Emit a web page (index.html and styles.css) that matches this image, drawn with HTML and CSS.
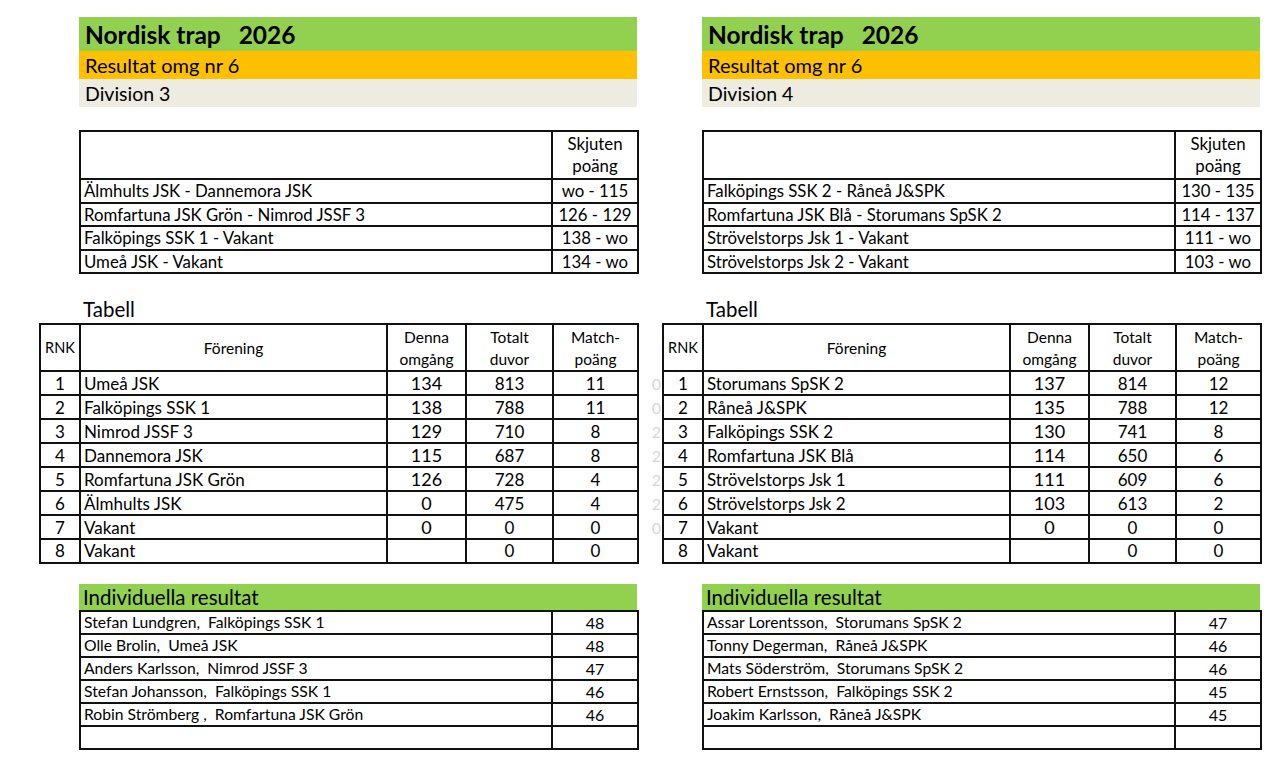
FILE: index.html
```html
<!DOCTYPE html>
<html lang="sv">
<head>
<meta charset="utf-8">
<title>Nordisk trap 2026</title>
<link rel="stylesheet" href="styles.css">
</head>
<body>
<div class="page">
  <section class="col col-left">
    <div class="head">
      <div class="title">Nordisk trap&nbsp;&nbsp; 2026</div>
      <div class="sub">Resultat omg nr 6</div>
      <div class="division">Division 3</div>
    </div>
    <table class="grid matches">
      <colgroup><col class="m-name"><col class="m-score"></colgroup>
      <tr class="hrow"><td></td><td class="c">Skjuten<br>poäng</td></tr>
      <tr><td>Älmhults JSK - Dannemora JSK</td><td class="c">wo - 115</td></tr>
      <tr><td>Romfartuna JSK Grön - Nimrod JSSF 3</td><td class="c">126 - 129</td></tr>
      <tr><td>Falköpings SSK 1 - Vakant</td><td class="c">138 - wo</td></tr>
      <tr><td>Umeå JSK - Vakant</td><td class="c">134 - wo</td></tr>
    </table>
    <div class="tlabel">Tabell</div>
    <table class="grid tabell">
      <colgroup><col class="t-rnk"><col class="t-name"><col class="t-denna"><col class="t-tot"><col class="t-mp"><col class="t-ghost"></colgroup>
      <tr class="hrow"><td class="c rnkh">RNK</td><td class="c th">Förening</td><td class="c th">Denna<br>omgång</td><td class="c th">Totalt<br>duvor</td><td class="c th">Match-<br>poäng</td><td class="ghost"></td></tr>
      <tr><td class="c">1</td><td>Umeå JSK</td><td class="c big">134</td><td class="c">813</td><td class="c">11</td><td class="ghost">0</td></tr>
      <tr><td class="c">2</td><td>Falköpings SSK 1</td><td class="c big">138</td><td class="c">788</td><td class="c">11</td><td class="ghost">0</td></tr>
      <tr><td class="c">3</td><td>Nimrod JSSF 3</td><td class="c big">129</td><td class="c">710</td><td class="c">8</td><td class="ghost">2</td></tr>
      <tr><td class="c">4</td><td>Dannemora JSK</td><td class="c big">115</td><td class="c">687</td><td class="c">8</td><td class="ghost">2</td></tr>
      <tr><td class="c">5</td><td>Romfartuna JSK Grön</td><td class="c big">126</td><td class="c">728</td><td class="c">4</td><td class="ghost">2</td></tr>
      <tr><td class="c">6</td><td>Älmhults JSK</td><td class="c big">0</td><td class="c">475</td><td class="c">4</td><td class="ghost">2</td></tr>
      <tr><td class="c">7</td><td>Vakant</td><td class="c big">0</td><td class="c">0</td><td class="c">0</td><td class="ghost">0</td></tr>
      <tr><td class="c">8</td><td>Vakant</td><td class="c big"></td><td class="c">0</td><td class="c">0</td><td class="ghost"></td></tr>
    </table>
    <div class="ihead">Individuella resultat</div>
    <table class="grid indiv">
      <colgroup><col class="m-name"><col class="m-score"></colgroup>
      <tr><td>Stefan Lundgren,&nbsp; Falköpings SSK 1</td><td class="c">48</td></tr>
      <tr><td>Olle Brolin,&nbsp; Umeå JSK</td><td class="c">48</td></tr>
      <tr><td>Anders Karlsson,&nbsp; Nimrod JSSF 3</td><td class="c">47</td></tr>
      <tr><td>Stefan Johansson,&nbsp; Falköpings SSK 1</td><td class="c">46</td></tr>
      <tr><td>Robin Strömberg ,&nbsp; Romfartuna JSK Grön</td><td class="c">46</td></tr>
      <tr><td></td><td></td></tr>
    </table>
  </section>

  <section class="col col-right">
    <div class="head">
      <div class="title">Nordisk trap&nbsp;&nbsp; 2026</div>
      <div class="sub">Resultat omg nr 6</div>
      <div class="division">Division 4</div>
    </div>
    <table class="grid matches">
      <colgroup><col class="m-name"><col class="m-score"></colgroup>
      <tr class="hrow"><td></td><td class="c">Skjuten<br>poäng</td></tr>
      <tr><td>Falköpings SSK 2 - Råneå J&amp;SPK</td><td class="c">130 - 135</td></tr>
      <tr><td>Romfartuna JSK Blå - Storumans SpSK 2</td><td class="c">114 - 137</td></tr>
      <tr><td>Strövelstorps Jsk 1 - Vakant</td><td class="c">111 - wo</td></tr>
      <tr><td>Strövelstorps Jsk 2 - Vakant</td><td class="c">103 - wo</td></tr>
    </table>
    <div class="tlabel">Tabell</div>
    <table class="grid tabell">
      <colgroup><col class="t-rnk"><col class="t-name"><col class="t-denna"><col class="t-tot"><col class="t-mp"></colgroup>
      <tr class="hrow"><td class="c rnkh">RNK</td><td class="c th">Förening</td><td class="c th">Denna<br>omgång</td><td class="c th">Totalt<br>duvor</td><td class="c th">Match-<br>poäng</td></tr>
      <tr><td class="c">1</td><td>Storumans SpSK 2</td><td class="c big">137</td><td class="c">814</td><td class="c">12</td></tr>
      <tr><td class="c">2</td><td>Råneå J&amp;SPK</td><td class="c big">135</td><td class="c">788</td><td class="c">12</td></tr>
      <tr><td class="c">3</td><td>Falköpings SSK 2</td><td class="c big">130</td><td class="c">741</td><td class="c">8</td></tr>
      <tr><td class="c">4</td><td>Romfartuna JSK Blå</td><td class="c big">114</td><td class="c">650</td><td class="c">6</td></tr>
      <tr><td class="c">5</td><td>Strövelstorps Jsk 1</td><td class="c big">111</td><td class="c">609</td><td class="c">6</td></tr>
      <tr><td class="c">6</td><td>Strövelstorps Jsk 2</td><td class="c big">103</td><td class="c">613</td><td class="c">2</td></tr>
      <tr><td class="c">7</td><td>Vakant</td><td class="c big">0</td><td class="c">0</td><td class="c">0</td></tr>
      <tr><td class="c">8</td><td>Vakant</td><td class="c big"></td><td class="c">0</td><td class="c">0</td></tr>
    </table>
    <div class="ihead">Individuella resultat</div>
    <table class="grid indiv">
      <colgroup><col class="m-name"><col class="m-score"></colgroup>
      <tr><td>Assar Lorentsson,&nbsp; Storumans SpSK 2</td><td class="c">47</td></tr>
      <tr><td>Tonny Degerman,&nbsp; Råneå J&amp;SPK</td><td class="c">46</td></tr>
      <tr><td>Mats Söderström,&nbsp; Storumans SpSK 2</td><td class="c">46</td></tr>
      <tr><td>Robert Ernstsson,&nbsp; Falköpings SSK 2</td><td class="c">45</td></tr>
      <tr><td>Joakim Karlsson,&nbsp; Råneå J&amp;SPK</td><td class="c">45</td></tr>
      <tr><td></td><td></td></tr>
    </table>
  </section>
</div>
</body>
</html>
```
FILE: styles.css
```css
* { box-sizing: border-box; }

body {
  margin: 0;
  background: #ffffff;
  color: #000000;
  font-family: Lato, "Liberation Sans", sans-serif;
}

.page {
  display: flex;
  align-items: flex-start;
  padding: 17px 0 0 39px;
}

.col {
  display: flex;
  flex-direction: column;
  width: 598px;
  flex: none;
}

.col-left { width: 623px; }

.head,
.matches,
.ihead,
.indiv,
.tlabel {
  margin-left: 40px;
  width: 558px;
}

.title {
  background: #92d050;
  height: 34px;
  line-height: 35px;
  padding-left: 6px;
  font-size: 24.5px;
  font-weight: 700;
}

.sub {
  background: #ffc000;
  height: 28px;
  line-height: 29px;
  padding-left: 6px;
  font-size: 20px;
}

.division {
  background: #eeece1;
  height: 28px;
  line-height: 29px;
  padding-left: 6px;
  font-size: 19.5px;
}

.grid {
  border-collapse: collapse;
  table-layout: fixed;
}

.grid td {
  border: 2px solid #111111;
  padding: 0 3px;
  font-size: 16.8px;
  white-space: nowrap;
  overflow: hidden;
  vertical-align: middle;
}

.grid .c { text-align: center; }

.matches { margin-top: 23px; }
.matches col.m-name, .indiv col.m-name { width: 472px; }
.matches col.m-score, .indiv col.m-score { width: 86px; }

.matches tr { height: 23.5px; }
.matches tr.hrow { height: 48px; }
.matches tr.hrow td { line-height: 22px; }

.tlabel {
  margin-top: 22px;
  height: 27px;
  line-height: 27px;
  padding-left: 4px;
  font-size: 20.5px;
}

.tabell { width: 598px; margin-left: 0; }
.col-left .tabell { width: 623px; }
.tabell col.t-rnk { width: 40px; }
.tabell col.t-name { width: 307px; }
.tabell col.t-denna { width: 79px; }
.tabell col.t-tot { width: 87px; }
.tabell col.t-mp { width: 85px; }
.tabell col.t-ghost { width: 25px; }

.tabell tr { height: 23.75px; }
.tabell tr.hrow { height: 47px; }
.tabell td { font-size: 17px; }
.tabell td.th { font-size: 15.5px; line-height: 22px; }
.tabell td.rnkh { font-size: 14.5px; padding: 0; }
.tabell td.big { font-size: 18px; }
.tabell td.ghost {
  border: none;
  color: #d6d6d6;
  text-align: right;
  padding-right: 1px;
  font-size: 16px;
}

.ihead {
  margin-top: 20px;
  background: #92d050;
  height: 26px;
  line-height: 27px;
  padding-left: 4px;
  font-size: 20.5px;
}

.indiv tr { height: 23px; }
.indiv td { font-size: 15.7px; }
.indiv td.c { font-size: 16px; }
```
